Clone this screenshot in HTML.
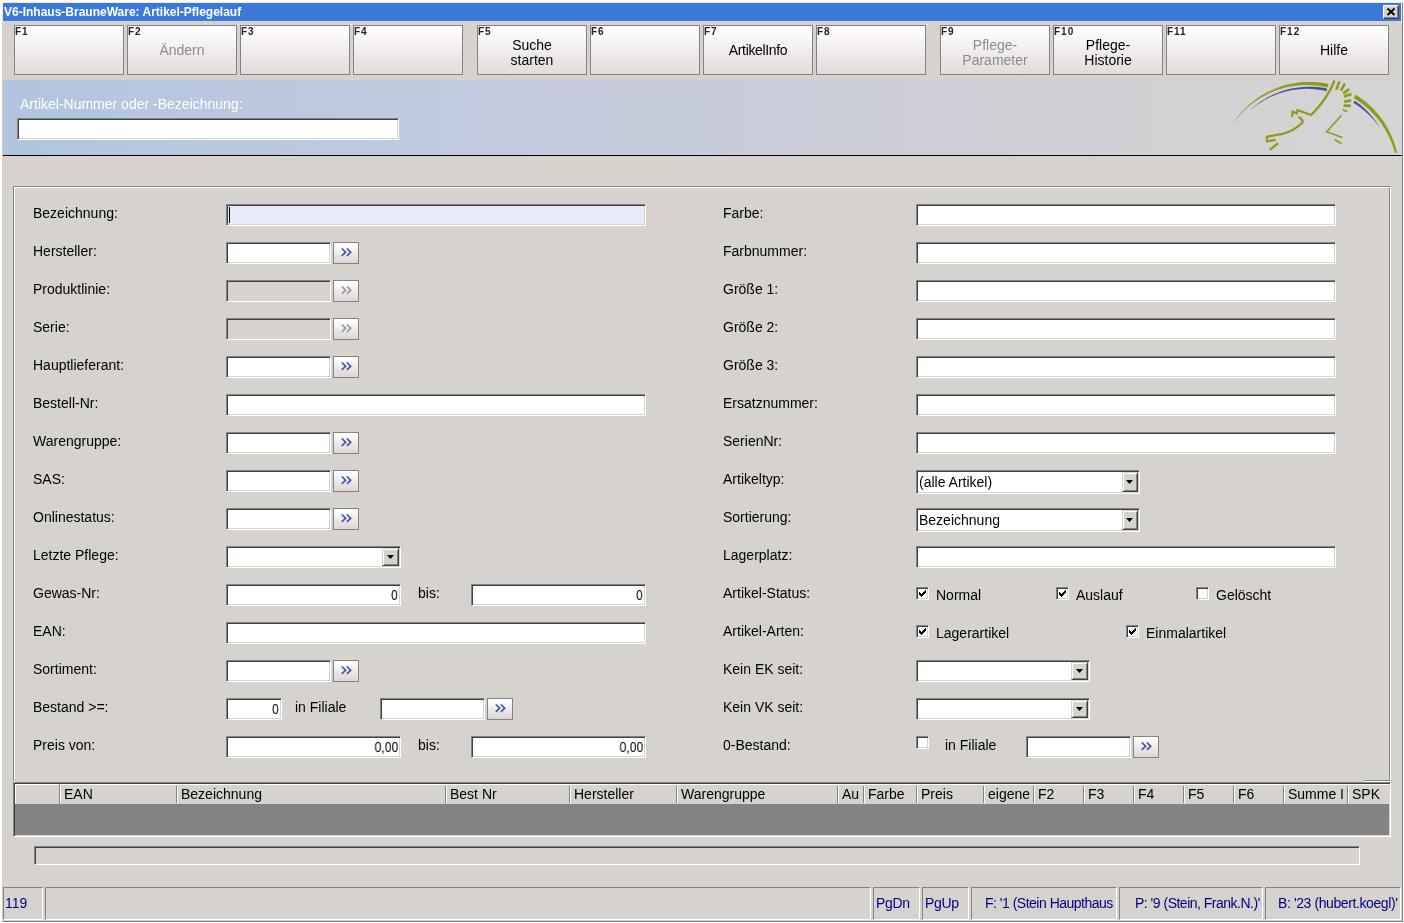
<!DOCTYPE html><html><head><meta charset="utf-8"><style>
*{box-sizing:border-box}
html,body{margin:0;padding:0}
body{width:1404px;height:923px;position:relative;overflow:hidden;background:#fff;font-family:"Liberation Sans",sans-serif;}
div{position:absolute}
.t{white-space:nowrap;will-change:transform}
.sk{border:1px solid;border-color:#848284 #fff #fff #848284;box-shadow:inset 1px 1px 0 #424142, inset -1px -1px 0 #d6d3ce}
.bt{border:1px solid #848284;background:linear-gradient(#fff 0%,#fbf8f9 20%,#ebe6e6 60%,#dcd6d5 100%)}
.fk{border:1px solid #848284;background:linear-gradient(#fff 0%,#fdfafb 15%,#f0ebec 55%,#e2dcdb 100%)}
.dd{right:1px;top:1px;width:17px;height:18px;background:#d6d3ce;border:1px solid;border-color:#d6d3ce #424142 #424142 #d6d3ce;box-shadow:inset 1px 1px 0 #fff, inset -1px -1px 0 #848284}
.cb{width:13px;height:13px;background:#fff;border:1px solid;border-color:#848284 #fff #fff #848284;box-shadow:inset 1px 1px 0 #424142, inset -1px -1px 0 #d6d3ce}
.sp{border:1px solid;border-color:#848284 #fff #fff #848284}
</style></head><body>
<div style="position:absolute;left:2px;top:2px;width:1401px;height:920px;background:#d6d3ce;border-left:1px solid #cfcbc3;border-top:1px solid #f1ebdf;border-right:1px solid #848284;border-bottom:1px solid #848284"></div>
<div style="position:absolute;left:2px;top:2px;width:1px;height:20px;background:#f1ebdf"></div>
<div style="position:absolute;left:1401px;top:2px;width:1px;height:20px;background:#f1ebdf"></div>
<div style="position:absolute;left:3px;top:3px;width:1398px;height:18px;background:#3a79d9"></div>
<div class="t" style="left:4px;top:5px;font-size:12px;line-height:14px;color:#fff;font-weight:bold;">V6-Inhaus-BrauneWare: Artikel-Pflegelauf</div>
<div style="position:absolute;left:1383px;top:5px;width:16px;height:14px;background:#d6d3ce;border:1px solid;border-color:#fff #424142 #424142 #fff;box-shadow:inset -1px -1px 0 #848284"><svg width="14" height="12" style="position:absolute;left:0;top:0"><path d="M3.5 2.5L10.5 9M10.5 2.5L3.5 9" stroke="#000" stroke-width="1.9"/></svg></div>
<div class="fk" style="left:14px;top:25px;width:110px;height:50px"><div class="t" style="left:0px;top:-1px;font-size:10px;line-height:13px;font-weight:bold;color:#222;letter-spacing:1px">F1</div></div>
<div class="fk" style="left:127px;top:25px;width:110px;height:50px"><div class="t" style="left:0px;top:-1px;font-size:10px;line-height:13px;font-weight:bold;color:#222;letter-spacing:1px">F2</div><div class="t" style="left:0;width:108px;top:16px;text-align:center;font-size:14px;line-height:16px;color:#8c8c8c;letter-spacing:0px">Ändern</div></div>
<div class="fk" style="left:240px;top:25px;width:110px;height:50px"><div class="t" style="left:0px;top:-1px;font-size:10px;line-height:13px;font-weight:bold;color:#222;letter-spacing:1px">F3</div></div>
<div class="fk" style="left:353px;top:25px;width:110px;height:50px"><div class="t" style="left:0px;top:-1px;font-size:10px;line-height:13px;font-weight:bold;color:#222;letter-spacing:1px">F4</div></div>
<div class="fk" style="left:477px;top:25px;width:110px;height:50px"><div class="t" style="left:0px;top:-1px;font-size:10px;line-height:13px;font-weight:bold;color:#222;letter-spacing:1px">F5</div><div class="t" style="white-space:normal;left:0;width:108px;top:12px;text-align:center;font-size:14px;line-height:15px;color:#000">Suche<br>starten</div></div>
<div class="fk" style="left:590px;top:25px;width:110px;height:50px"><div class="t" style="left:0px;top:-1px;font-size:10px;line-height:13px;font-weight:bold;color:#222;letter-spacing:1px">F6</div></div>
<div class="fk" style="left:703px;top:25px;width:110px;height:50px"><div class="t" style="left:0px;top:-1px;font-size:10px;line-height:13px;font-weight:bold;color:#222;letter-spacing:1px">F7</div><div class="t" style="left:0;width:108px;top:16px;text-align:center;font-size:14px;line-height:16px;color:#000;letter-spacing:-0.35px">ArtikelInfo</div></div>
<div class="fk" style="left:816px;top:25px;width:110px;height:50px"><div class="t" style="left:0px;top:-1px;font-size:10px;line-height:13px;font-weight:bold;color:#222;letter-spacing:1px">F8</div></div>
<div class="fk" style="left:940px;top:25px;width:110px;height:50px"><div class="t" style="left:0px;top:-1px;font-size:10px;line-height:13px;font-weight:bold;color:#222;letter-spacing:1px">F9</div><div class="t" style="white-space:normal;left:0;width:108px;top:12px;text-align:center;font-size:14px;line-height:15px;color:#8c8c8c">Pflege-<br>Parameter</div></div>
<div class="fk" style="left:1053px;top:25px;width:110px;height:50px"><div class="t" style="left:0px;top:-1px;font-size:10px;line-height:13px;font-weight:bold;color:#222;letter-spacing:1px">F10</div><div class="t" style="white-space:normal;left:0;width:108px;top:12px;text-align:center;font-size:14px;line-height:15px;color:#000">Pflege-<br>Historie</div></div>
<div class="fk" style="left:1166px;top:25px;width:110px;height:50px"><div class="t" style="left:0px;top:-1px;font-size:10px;line-height:13px;font-weight:bold;color:#222;letter-spacing:1px">F11</div></div>
<div class="fk" style="left:1279px;top:25px;width:110px;height:50px"><div class="t" style="left:0px;top:-1px;font-size:10px;line-height:13px;font-weight:bold;color:#222;letter-spacing:1px">F12</div><div class="t" style="left:0;width:108px;top:16px;text-align:center;font-size:14px;line-height:16px;color:#000;letter-spacing:0px">Hilfe</div></div>
<div style="position:absolute;left:3px;top:80px;width:1399px;height:75px;background:linear-gradient(90deg,#b1c5df 0%,#c0cadf 30%,#cbcdd8 60%,#d3d1d3 85%,#d7d4d4 100%)"></div>
<div style="position:absolute;left:3px;top:155px;width:1399px;height:1px;background:#000"></div>
<div class="t" style="left:20px;top:96px;font-size:14px;line-height:16px;color:#ffffff;font-weight:normal;">Artikel-Nummer oder -Bezeichnung:</div>
<div class="sk" style="left:17px;top:118px;width:382px;height:22px;background:#fff"></div>
<svg width="180" height="84" viewBox="0 0 180 84" style="position:absolute;left:1224px;top:76px"><path d="M9.16 47.25 L10.67 45.00 L12.25 42.79 L13.90 40.63 L15.61 38.52 L17.39 36.46 L19.23 34.45 L21.13 32.50 L23.09 30.61 L25.10 28.77 L27.17 27.00 L29.30 25.28 L31.47 23.64 L33.70 22.05 L35.97 20.53 L38.29 19.09 L40.65 17.71 L43.05 16.40 L45.50 15.16 L47.98 14.00 L50.49 12.91 L53.04 11.90 L55.62 10.96 L58.22 10.10 L60.86 9.32 L63.51 8.62 L66.19 8.00 L68.88 7.46 L71.60 7.00 L74.32 6.62 L77.06 6.32 L79.81 6.11 L82.56 5.97 L85.32 5.92 L88.08 5.96 L90.84 6.07 L93.59 6.27 L96.34 6.55 L99.08 6.92 L101.81 7.36 L104.53 7.89 L103.68 11.60 L101.10 11.00 L98.49 10.49 L95.87 10.05 L93.24 9.69 L90.59 9.41 L87.94 9.21 L85.28 9.09 L82.61 9.05 L79.95 9.09 L77.28 9.21 L74.62 9.41 L71.97 9.69 L69.32 10.05 L66.69 10.49 L64.06 11.01 L61.46 11.60 L58.87 12.28 L56.30 13.03 L53.75 13.86 L51.23 14.77 L48.73 15.75 L46.27 16.81 L43.83 17.94 L41.43 19.15 L39.07 20.43 L36.74 21.77 L34.46 23.19 L32.21 24.68 L30.01 26.23 L27.86 27.85 L25.76 29.54 L23.71 31.29 L21.71 33.10 L19.76 34.97 L17.87 36.90 L16.04 38.88 L14.26 40.93 L12.55 43.02 L10.90 45.17 L9.32 47.36Z" fill="#8e9b1c"/><path d="M27.58 32.78 L29.10 31.46 L30.65 30.17 L32.23 28.91 L33.83 27.69 L35.47 26.51 L37.14 25.37 L38.83 24.27 L40.54 23.20 L42.29 22.18 L44.05 21.20 L45.84 20.26 L47.66 19.36 L49.49 18.50 L51.34 17.69 L53.21 16.92 L55.10 16.19 L57.01 15.51 L58.93 14.87 L60.87 14.27 L62.83 13.72 L64.79 13.22 L66.77 12.77 L68.76 12.36 L70.75 11.99 L72.76 11.67 L74.78 11.40 L76.80 11.18 L78.82 11.01 L80.85 10.88 L82.89 10.80 L84.92 10.76 L86.96 10.78 L88.99 10.84 L91.03 10.95 L93.06 11.11 L95.09 11.31 L97.11 11.56 L99.13 11.86 L101.14 12.21 L103.14 12.60 L102.58 15.14 L100.64 14.70 L98.70 14.31 L96.75 13.96 L94.79 13.66 L92.82 13.41 L90.85 13.20 L88.87 13.03 L86.89 12.92 L84.90 12.85 L82.91 12.82 L80.93 12.84 L78.94 12.91 L76.95 13.03 L74.97 13.19 L72.99 13.40 L71.01 13.65 L69.04 13.95 L67.08 14.30 L65.13 14.69 L63.18 15.13 L61.25 15.61 L59.32 16.14 L57.41 16.72 L55.51 17.34 L53.63 18.00 L51.76 18.71 L49.91 19.46 L48.07 20.26 L46.26 21.09 L44.46 21.97 L42.68 22.90 L40.93 23.86 L39.20 24.87 L37.49 25.91 L35.80 27.00 L34.14 28.12 L32.51 29.29 L30.90 30.49 L29.33 31.73 L27.78 33.01Z" fill="#3b5595"/><path d="M131.91 18.85 L133.45 19.83 L134.97 20.84 L136.47 21.88 L137.95 22.95 L139.40 24.04 L140.84 25.17 L142.25 26.32 L143.63 27.50 L145.00 28.71 L146.33 29.94 L147.65 31.20 L148.94 32.49 L150.20 33.80 L151.43 35.13 L152.64 36.49 L153.82 37.87 L154.98 39.27 L156.10 40.70 L157.20 42.15 L158.27 43.62 L159.30 45.11 L160.31 46.62 L161.29 48.14 L162.24 49.69 L163.15 51.26 L164.04 52.84 L164.89 54.44 L165.71 56.05 L166.50 57.69 L167.26 59.33 L167.98 60.99 L168.67 62.67 L169.33 64.35 L169.95 66.05 L170.54 67.76 L171.10 69.48 L171.62 71.21 L172.11 72.96 L172.56 74.71 L172.97 76.46 L170.84 76.98 L170.39 75.27 L169.90 73.58 L169.38 71.89 L168.83 70.22 L168.25 68.56 L167.64 66.91 L166.99 65.27 L166.31 63.65 L165.60 62.04 L164.85 60.44 L164.08 58.87 L163.27 57.30 L162.44 55.76 L161.57 54.23 L160.68 52.72 L159.75 51.22 L158.80 49.75 L157.81 48.29 L156.80 46.86 L155.76 45.45 L154.70 44.05 L153.60 42.68 L152.48 41.33 L151.34 40.01 L150.16 38.71 L148.97 37.43 L147.74 36.17 L146.50 34.94 L145.23 33.74 L143.94 32.56 L142.62 31.41 L141.28 30.28 L139.92 29.18 L138.54 28.11 L137.14 27.06 L135.72 26.05 L134.28 25.06 L132.82 24.10 L131.34 23.17 L129.84 22.27Z" fill="#8e9b1c"/><path d="M130.68 24.68 L131.45 25.21 L132.20 25.74 L132.95 26.28 L133.70 26.83 L134.44 27.39 L135.17 27.96 L135.89 28.53 L136.61 29.11 L137.33 29.70 L138.03 30.30 L138.73 30.90 L139.42 31.51 L140.11 32.13 L140.79 32.76 L141.46 33.39 L142.13 34.03 L142.79 34.67 L143.44 35.33 L144.08 35.99 L144.72 36.65 L145.34 37.33 L145.97 38.00 L146.58 38.69 L147.19 39.38 L147.78 40.08 L148.38 40.78 L148.96 41.49 L149.53 42.21 L150.10 42.93 L150.66 43.66 L151.21 44.39 L151.76 45.13 L152.29 45.88 L152.82 46.63 L153.34 47.38 L153.85 48.14 L154.35 48.91 L154.84 49.68 L155.33 50.45 L155.81 51.23 L155.64 51.34 L155.11 50.60 L154.58 49.86 L154.04 49.12 L153.49 48.40 L152.93 47.67 L152.37 46.96 L151.80 46.25 L151.22 45.55 L150.63 44.85 L150.04 44.16 L149.44 43.48 L148.83 42.81 L148.22 42.14 L147.60 41.47 L146.97 40.82 L146.33 40.17 L145.69 39.53 L145.05 38.89 L144.39 38.27 L143.73 37.65 L143.06 37.03 L142.39 36.43 L141.71 35.83 L141.02 35.24 L140.33 34.66 L139.63 34.08 L138.93 33.52 L138.22 32.96 L137.51 32.41 L136.78 31.86 L136.06 31.33 L135.33 30.80 L134.59 30.28 L133.85 29.77 L133.10 29.26 L132.35 28.77 L131.59 28.28 L130.83 27.80 L130.06 27.33 L129.29 26.87Z" fill="#3b5595"/>
<g fill="none" stroke="#8e9b1c" stroke-linecap="butt" stroke-linejoin="miter">
<path d="M110.5 4.5 Q104 22 87.2 39 L73.6 34.3 L72.8 37.3 L68.6 35.8 L68 41" stroke-width="2.2"/>
<path d="M74.5 40.9 Q79.5 43.5 78.3 46.8 Q70 55 58.4 57.8 L42.3 60.8" stroke-width="2.3"/>
<path d="M42.6 60 L43 66.5" stroke-width="2"/>
<path d="M42.5 65.4 L51.6 63.9 M45.7 73.9 L54.2 67.1" stroke-width="2.2"/>
<path d="M117.5 39.2 L102.7 55.7 L118.3 61.6" stroke-width="1.6"/>
<path d="M110.7 63.7 L117.5 67.5" stroke-width="1.8"/>
<path d="M115.4 5.4 L112.4 13.8 M120.9 7.5 L117 14.7 M125.1 13 L119.2 17.6 M127.6 18 L120 20.6 M127.2 24.4 L120 25.7 M126.8 29.9 L119.6 29.5" stroke-width="2.6"/>
<path d="M123.4 35.8 L118.7 33.7" stroke-width="1.6"/>
</g></svg>
<div style="position:absolute;left:13px;top:186px;width:1378px;height:596px;border:1px solid;border-color:#848284 #fff #fff #848284;box-shadow:inset 1px 1px 0 #fff, inset -1px -1px 0 #848284"></div>
<div style="position:absolute;left:16px;top:780px;width:1348px;height:2px;background:#d6d3ce"></div>
<div class="t" style="left:33px;top:205px;font-size:14px;line-height:16px;color:#000;font-weight:normal;">Bezeichnung:</div>
<div class="t" style="left:33px;top:243px;font-size:14px;line-height:16px;color:#000;font-weight:normal;">Hersteller:</div>
<div class="t" style="left:33px;top:281px;font-size:14px;line-height:16px;color:#000;font-weight:normal;">Produktlinie:</div>
<div class="t" style="left:33px;top:319px;font-size:14px;line-height:16px;color:#000;font-weight:normal;">Serie:</div>
<div class="t" style="left:33px;top:357px;font-size:14px;line-height:16px;color:#000;font-weight:normal;">Hauptlieferant:</div>
<div class="t" style="left:33px;top:395px;font-size:14px;line-height:16px;color:#000;font-weight:normal;">Bestell-Nr:</div>
<div class="t" style="left:33px;top:433px;font-size:14px;line-height:16px;color:#000;font-weight:normal;">Warengruppe:</div>
<div class="t" style="left:33px;top:471px;font-size:14px;line-height:16px;color:#000;font-weight:normal;">SAS:</div>
<div class="t" style="left:33px;top:509px;font-size:14px;line-height:16px;color:#000;font-weight:normal;">Onlinestatus:</div>
<div class="t" style="left:33px;top:547px;font-size:14px;line-height:16px;color:#000;font-weight:normal;">Letzte Pflege:</div>
<div class="t" style="left:33px;top:585px;font-size:14px;line-height:16px;color:#000;font-weight:normal;">Gewas-Nr:</div>
<div class="t" style="left:33px;top:623px;font-size:14px;line-height:16px;color:#000;font-weight:normal;">EAN:</div>
<div class="t" style="left:33px;top:661px;font-size:14px;line-height:16px;color:#000;font-weight:normal;">Sortiment:</div>
<div class="t" style="left:33px;top:699px;font-size:14px;line-height:16px;color:#000;font-weight:normal;">Bestand &gt;=:</div>
<div class="t" style="left:33px;top:737px;font-size:14px;line-height:16px;color:#000;font-weight:normal;">Preis von:</div>
<div class="t" style="left:723px;top:205px;font-size:14px;line-height:16px;color:#000;font-weight:normal;">Farbe:</div>
<div class="t" style="left:723px;top:243px;font-size:14px;line-height:16px;color:#000;font-weight:normal;">Farbnummer:</div>
<div class="t" style="left:723px;top:281px;font-size:14px;line-height:16px;color:#000;font-weight:normal;">Größe 1:</div>
<div class="t" style="left:723px;top:319px;font-size:14px;line-height:16px;color:#000;font-weight:normal;">Größe 2:</div>
<div class="t" style="left:723px;top:357px;font-size:14px;line-height:16px;color:#000;font-weight:normal;">Größe 3:</div>
<div class="t" style="left:723px;top:395px;font-size:14px;line-height:16px;color:#000;font-weight:normal;">Ersatznummer:</div>
<div class="t" style="left:723px;top:433px;font-size:14px;line-height:16px;color:#000;font-weight:normal;">SerienNr:</div>
<div class="t" style="left:723px;top:471px;font-size:14px;line-height:16px;color:#000;font-weight:normal;">Artikeltyp:</div>
<div class="t" style="left:723px;top:509px;font-size:14px;line-height:16px;color:#000;font-weight:normal;">Sortierung:</div>
<div class="t" style="left:723px;top:547px;font-size:14px;line-height:16px;color:#000;font-weight:normal;">Lagerplatz:</div>
<div class="t" style="left:723px;top:585px;font-size:14px;line-height:16px;color:#000;font-weight:normal;">Artikel-Status:</div>
<div class="t" style="left:723px;top:623px;font-size:14px;line-height:16px;color:#000;font-weight:normal;">Artikel-Arten:</div>
<div class="t" style="left:723px;top:661px;font-size:14px;line-height:16px;color:#000;font-weight:normal;">Kein EK seit:</div>
<div class="t" style="left:723px;top:699px;font-size:14px;line-height:16px;color:#000;font-weight:normal;">Kein VK seit:</div>
<div class="t" style="left:723px;top:737px;font-size:14px;line-height:16px;color:#000;font-weight:normal;">0-Bestand:</div>
<div class="sk" style="left:226px;top:204px;width:420px;height:22px;background:#e7ebf7"><div style="left:2px;top:2px;width:1px;height:16px;background:#000"></div></div>
<div class="sk" style="left:226px;top:242px;width:105px;height:22px;background:#fff"></div>
<div class="bt" style="left:333px;top:242px;width:26px;height:22px"><svg width="12" height="10" viewBox="0 0 12 10" style="position:absolute;left:7px;top:5px"><path d="M0.8 0.5 L4.6 4.2 L0.8 7.9 M5.9 0.5 L9.7 4.2 L5.9 7.9" fill="none" stroke="#4259ac" stroke-width="1.7"/></svg></div>
<div class="sk" style="left:226px;top:280px;width:105px;height:22px;background:#d6d3ce"></div>
<div class="bt" style="left:333px;top:280px;width:26px;height:22px"><svg width="12" height="10" viewBox="0 0 12 10" style="position:absolute;left:7px;top:5px"><path d="M0.8 0.5 L4.6 4.2 L0.8 7.9 M5.9 0.5 L9.7 4.2 L5.9 7.9" fill="none" stroke="#9c9c9c" stroke-width="1.7"/></svg></div>
<div class="sk" style="left:226px;top:318px;width:105px;height:22px;background:#d6d3ce"></div>
<div class="bt" style="left:333px;top:318px;width:26px;height:22px"><svg width="12" height="10" viewBox="0 0 12 10" style="position:absolute;left:7px;top:5px"><path d="M0.8 0.5 L4.6 4.2 L0.8 7.9 M5.9 0.5 L9.7 4.2 L5.9 7.9" fill="none" stroke="#9c9c9c" stroke-width="1.7"/></svg></div>
<div class="sk" style="left:226px;top:356px;width:105px;height:22px;background:#fff"></div>
<div class="bt" style="left:333px;top:356px;width:26px;height:22px"><svg width="12" height="10" viewBox="0 0 12 10" style="position:absolute;left:7px;top:5px"><path d="M0.8 0.5 L4.6 4.2 L0.8 7.9 M5.9 0.5 L9.7 4.2 L5.9 7.9" fill="none" stroke="#4259ac" stroke-width="1.7"/></svg></div>
<div class="sk" style="left:226px;top:432px;width:105px;height:22px;background:#fff"></div>
<div class="bt" style="left:333px;top:432px;width:26px;height:22px"><svg width="12" height="10" viewBox="0 0 12 10" style="position:absolute;left:7px;top:5px"><path d="M0.8 0.5 L4.6 4.2 L0.8 7.9 M5.9 0.5 L9.7 4.2 L5.9 7.9" fill="none" stroke="#4259ac" stroke-width="1.7"/></svg></div>
<div class="sk" style="left:226px;top:470px;width:105px;height:22px;background:#fff"></div>
<div class="bt" style="left:333px;top:470px;width:26px;height:22px"><svg width="12" height="10" viewBox="0 0 12 10" style="position:absolute;left:7px;top:5px"><path d="M0.8 0.5 L4.6 4.2 L0.8 7.9 M5.9 0.5 L9.7 4.2 L5.9 7.9" fill="none" stroke="#4259ac" stroke-width="1.7"/></svg></div>
<div class="sk" style="left:226px;top:508px;width:105px;height:22px;background:#fff"></div>
<div class="bt" style="left:333px;top:508px;width:26px;height:22px"><svg width="12" height="10" viewBox="0 0 12 10" style="position:absolute;left:7px;top:5px"><path d="M0.8 0.5 L4.6 4.2 L0.8 7.9 M5.9 0.5 L9.7 4.2 L5.9 7.9" fill="none" stroke="#4259ac" stroke-width="1.7"/></svg></div>
<div class="sk" style="left:226px;top:660px;width:105px;height:22px;background:#fff"></div>
<div class="bt" style="left:333px;top:660px;width:26px;height:22px"><svg width="12" height="10" viewBox="0 0 12 10" style="position:absolute;left:7px;top:5px"><path d="M0.8 0.5 L4.6 4.2 L0.8 7.9 M5.9 0.5 L9.7 4.2 L5.9 7.9" fill="none" stroke="#4259ac" stroke-width="1.7"/></svg></div>
<div class="sk" style="left:226px;top:394px;width:420px;height:22px;background:#fff"></div>
<div class="sk" style="left:226px;top:546px;width:175px;height:22px;background:#fff"><div class="dd" style="height:18px;width:17px"><svg width="7" height="4" style="position:absolute;left:4px;top:6px"><path d="M0 0H7L3.5 4Z" fill="#000"/></svg></div></div>
<div class="sk" style="left:226px;top:584px;width:175px;height:22px;background:#fff"><div class="t" style="right:2px;top:2px;font-size:14px;line-height:16px;transform:scaleX(0.87);transform-origin:100% 50%">0</div></div>
<div class="t" style="left:418px;top:585px;font-size:14px;line-height:16px;color:#000;font-weight:normal;">bis:</div>
<div class="sk" style="left:471px;top:584px;width:175px;height:22px;background:#fff"><div class="t" style="right:2px;top:2px;font-size:14px;line-height:16px;transform:scaleX(0.87);transform-origin:100% 50%">0</div></div>
<div class="sk" style="left:226px;top:622px;width:420px;height:22px;background:#fff"></div>
<div class="sk" style="left:226px;top:698px;width:56px;height:22px;background:#fff"><div class="t" style="right:2px;top:2px;font-size:14px;line-height:16px;transform:scaleX(0.87);transform-origin:100% 50%">0</div></div>
<div class="t" style="left:295px;top:699px;font-size:14px;line-height:16px;color:#000;font-weight:normal;">in Filiale</div>
<div class="sk" style="left:380px;top:698px;width:105px;height:22px;background:#fff"></div>
<div class="bt" style="left:487px;top:698px;width:26px;height:22px"><svg width="12" height="10" viewBox="0 0 12 10" style="position:absolute;left:7px;top:5px"><path d="M0.8 0.5 L4.6 4.2 L0.8 7.9 M5.9 0.5 L9.7 4.2 L5.9 7.9" fill="none" stroke="#4259ac" stroke-width="1.7"/></svg></div>
<div class="sk" style="left:226px;top:736px;width:175px;height:22px;background:#fff"><div class="t" style="right:2px;top:2px;font-size:14px;line-height:16px;transform:scaleX(0.87);transform-origin:100% 50%">0,00</div></div>
<div class="t" style="left:418px;top:737px;font-size:14px;line-height:16px;color:#000;font-weight:normal;">bis:</div>
<div class="sk" style="left:471px;top:736px;width:175px;height:22px;background:#fff"><div class="t" style="right:2px;top:2px;font-size:14px;line-height:16px;transform:scaleX(0.87);transform-origin:100% 50%">0,00</div></div>
<div class="sk" style="left:916px;top:204px;width:420px;height:22px;background:#fff"></div>
<div class="sk" style="left:916px;top:242px;width:420px;height:22px;background:#fff"></div>
<div class="sk" style="left:916px;top:280px;width:420px;height:22px;background:#fff"></div>
<div class="sk" style="left:916px;top:318px;width:420px;height:22px;background:#fff"></div>
<div class="sk" style="left:916px;top:356px;width:420px;height:22px;background:#fff"></div>
<div class="sk" style="left:916px;top:394px;width:420px;height:22px;background:#fff"></div>
<div class="sk" style="left:916px;top:432px;width:420px;height:22px;background:#fff"></div>
<div class="sk" style="left:916px;top:546px;width:420px;height:22px;background:#fff"></div>
<div class="sk" style="left:916px;top:470px;width:224px;height:24px;background:#fff"><div class="t" style="left:2px;top:3px;font-size:14px;line-height:16px">(alle Artikel)</div><div class="dd" style="height:20px;width:16px"><svg width="7" height="4" style="position:absolute;left:3px;top:7px"><path d="M0 0H7L3.5 4Z" fill="#000"/></svg></div></div>
<div class="sk" style="left:916px;top:508px;width:224px;height:24px;background:#fff"><div class="t" style="left:2px;top:3px;font-size:14px;line-height:16px">Bezeichnung</div><div class="dd" style="height:20px;width:16px"><svg width="7" height="4" style="position:absolute;left:3px;top:7px"><path d="M0 0H7L3.5 4Z" fill="#000"/></svg></div></div>
<div class="cb" style="left:916px;top:587px"><svg width="7" height="7" shape-rendering="crispEdges" style="position:absolute;left:2px;top:2px"><path d="M6 0h1v3h-1zM5 1h1v3h-1zM4 2h1v3h-1zM3 3h1v3h-1zM2 4h1v3h-1zM1 3h1v3h-1zM0 2h1v3h-1z" fill="#000"/></svg></div>
<div class="t" style="left:936px;top:587px;font-size:14px;line-height:16px;color:#000;font-weight:normal;">Normal</div>
<div class="cb" style="left:1056px;top:587px"><svg width="7" height="7" shape-rendering="crispEdges" style="position:absolute;left:2px;top:2px"><path d="M6 0h1v3h-1zM5 1h1v3h-1zM4 2h1v3h-1zM3 3h1v3h-1zM2 4h1v3h-1zM1 3h1v3h-1zM0 2h1v3h-1z" fill="#000"/></svg></div>
<div class="t" style="left:1076px;top:587px;font-size:14px;line-height:16px;color:#000;font-weight:normal;">Auslauf</div>
<div class="cb" style="left:1196px;top:587px"></div>
<div class="t" style="left:1216px;top:587px;font-size:14px;line-height:16px;color:#000;font-weight:normal;">Gelöscht</div>
<div class="cb" style="left:916px;top:625px"><svg width="7" height="7" shape-rendering="crispEdges" style="position:absolute;left:2px;top:2px"><path d="M6 0h1v3h-1zM5 1h1v3h-1zM4 2h1v3h-1zM3 3h1v3h-1zM2 4h1v3h-1zM1 3h1v3h-1zM0 2h1v3h-1z" fill="#000"/></svg></div>
<div class="t" style="left:936px;top:625px;font-size:14px;line-height:16px;color:#000;font-weight:normal;">Lagerartikel</div>
<div class="cb" style="left:1126px;top:625px"><svg width="7" height="7" shape-rendering="crispEdges" style="position:absolute;left:2px;top:2px"><path d="M6 0h1v3h-1zM5 1h1v3h-1zM4 2h1v3h-1zM3 3h1v3h-1zM2 4h1v3h-1zM1 3h1v3h-1zM0 2h1v3h-1z" fill="#000"/></svg></div>
<div class="t" style="left:1146px;top:625px;font-size:14px;line-height:16px;color:#000;font-weight:normal;">Einmalartikel</div>
<div class="sk" style="left:916px;top:660px;width:174px;height:22px;background:#fff"><div class="dd" style="height:18px;width:17px"><svg width="7" height="4" style="position:absolute;left:4px;top:6px"><path d="M0 0H7L3.5 4Z" fill="#000"/></svg></div></div>
<div class="sk" style="left:916px;top:698px;width:174px;height:22px;background:#fff"><div class="dd" style="height:18px;width:17px"><svg width="7" height="4" style="position:absolute;left:4px;top:6px"><path d="M0 0H7L3.5 4Z" fill="#000"/></svg></div></div>
<div class="cb" style="left:916px;top:736px"></div>
<div class="t" style="left:945px;top:737px;font-size:14px;line-height:16px;color:#000;font-weight:normal;">in Filiale</div>
<div class="sk" style="left:1026px;top:736px;width:105px;height:22px;background:#fff"></div>
<div class="bt" style="left:1133px;top:736px;width:26px;height:22px"><svg width="12" height="10" viewBox="0 0 12 10" style="position:absolute;left:7px;top:5px"><path d="M0.8 0.5 L4.6 4.2 L0.8 7.9 M5.9 0.5 L9.7 4.2 L5.9 7.9" fill="none" stroke="#4259ac" stroke-width="1.7"/></svg></div>
<div style="position:absolute;left:13px;top:782px;width:1378px;height:55px;border:1px solid;border-color:#848284 #fff #fff #848284;box-shadow:inset 1px 1px 0 #424142, inset -1px -1px 0 #d6d3ce;background:#848284"></div>
<div style="position:absolute;left:15px;top:784px;width:45px;height:20px;background:#d6d3ce;border-top:1px solid #fff;border-left:1px solid #fff;border-right:1px solid #848284"></div>
<div style="position:absolute;left:60px;top:784px;width:1329px;height:20px;background:#d6d3ce;border-top:1px solid #fff;border-left:1px solid #fff"></div>
<div class="t" style="left:64px;top:786px;font-size:14px;line-height:16px;color:#000;font-weight:normal;">EAN</div>
<div style="position:absolute;left:176px;top:786px;width:1px;height:17px;background:#848284"></div>
<div style="position:absolute;left:177px;top:786px;width:1px;height:17px;background:#fff"></div>
<div class="t" style="left:181px;top:786px;font-size:14px;line-height:16px;color:#000;font-weight:normal;">Bezeichnung</div>
<div style="position:absolute;left:445px;top:786px;width:1px;height:17px;background:#848284"></div>
<div style="position:absolute;left:446px;top:786px;width:1px;height:17px;background:#fff"></div>
<div class="t" style="left:450px;top:786px;font-size:14px;line-height:16px;color:#000;font-weight:normal;">Best Nr</div>
<div style="position:absolute;left:569px;top:786px;width:1px;height:17px;background:#848284"></div>
<div style="position:absolute;left:570px;top:786px;width:1px;height:17px;background:#fff"></div>
<div class="t" style="left:574px;top:786px;font-size:14px;line-height:16px;color:#000;font-weight:normal;">Hersteller</div>
<div style="position:absolute;left:676px;top:786px;width:1px;height:17px;background:#848284"></div>
<div style="position:absolute;left:677px;top:786px;width:1px;height:17px;background:#fff"></div>
<div class="t" style="left:681px;top:786px;font-size:14px;line-height:16px;color:#000;font-weight:normal;">Warengruppe</div>
<div style="position:absolute;left:837px;top:786px;width:1px;height:17px;background:#848284"></div>
<div style="position:absolute;left:838px;top:786px;width:1px;height:17px;background:#fff"></div>
<div class="t" style="left:842px;top:786px;font-size:14px;line-height:16px;color:#000;font-weight:normal;">Au</div>
<div style="position:absolute;left:863px;top:786px;width:1px;height:17px;background:#848284"></div>
<div style="position:absolute;left:864px;top:786px;width:1px;height:17px;background:#fff"></div>
<div class="t" style="left:868px;top:786px;font-size:14px;line-height:16px;color:#000;font-weight:normal;">Farbe</div>
<div style="position:absolute;left:916px;top:786px;width:1px;height:17px;background:#848284"></div>
<div style="position:absolute;left:917px;top:786px;width:1px;height:17px;background:#fff"></div>
<div class="t" style="left:921px;top:786px;font-size:14px;line-height:16px;color:#000;font-weight:normal;">Preis</div>
<div style="position:absolute;left:983px;top:786px;width:1px;height:17px;background:#848284"></div>
<div style="position:absolute;left:984px;top:786px;width:1px;height:17px;background:#fff"></div>
<div class="t" style="left:988px;top:786px;font-size:14px;line-height:16px;color:#000;font-weight:normal;">eigene</div>
<div style="position:absolute;left:1033px;top:786px;width:1px;height:17px;background:#848284"></div>
<div style="position:absolute;left:1034px;top:786px;width:1px;height:17px;background:#fff"></div>
<div class="t" style="left:1038px;top:786px;font-size:14px;line-height:16px;color:#000;font-weight:normal;">F2</div>
<div style="position:absolute;left:1083px;top:786px;width:1px;height:17px;background:#848284"></div>
<div style="position:absolute;left:1084px;top:786px;width:1px;height:17px;background:#fff"></div>
<div class="t" style="left:1088px;top:786px;font-size:14px;line-height:16px;color:#000;font-weight:normal;">F3</div>
<div style="position:absolute;left:1133px;top:786px;width:1px;height:17px;background:#848284"></div>
<div style="position:absolute;left:1134px;top:786px;width:1px;height:17px;background:#fff"></div>
<div class="t" style="left:1138px;top:786px;font-size:14px;line-height:16px;color:#000;font-weight:normal;">F4</div>
<div style="position:absolute;left:1183px;top:786px;width:1px;height:17px;background:#848284"></div>
<div style="position:absolute;left:1184px;top:786px;width:1px;height:17px;background:#fff"></div>
<div class="t" style="left:1188px;top:786px;font-size:14px;line-height:16px;color:#000;font-weight:normal;">F5</div>
<div style="position:absolute;left:1233px;top:786px;width:1px;height:17px;background:#848284"></div>
<div style="position:absolute;left:1234px;top:786px;width:1px;height:17px;background:#fff"></div>
<div class="t" style="left:1238px;top:786px;font-size:14px;line-height:16px;color:#000;font-weight:normal;">F6</div>
<div style="position:absolute;left:1283px;top:786px;width:1px;height:17px;background:#848284"></div>
<div style="position:absolute;left:1284px;top:786px;width:1px;height:17px;background:#fff"></div>
<div class="t" style="left:1288px;top:786px;font-size:14px;line-height:16px;color:#000;font-weight:normal;">Summe I</div>
<div style="position:absolute;left:1347px;top:786px;width:1px;height:17px;background:#848284"></div>
<div style="position:absolute;left:1348px;top:786px;width:1px;height:17px;background:#fff"></div>
<div class="t" style="left:1352px;top:786px;font-size:14px;line-height:16px;color:#000;font-weight:normal;">SPK</div>
<div class="sk" style="left:34px;top:846px;width:1326px;height:19px;background:#d6d3ce"></div>
<div class="sp" style="left:3px;top:887px;width:40px;height:33px;overflow:hidden"><div class="t" style="left:1px;top:7px;font-size:14px;line-height:16px;color:#000084;letter-spacing:0px">119</div></div>
<div class="sp" style="left:45px;top:887px;width:826px;height:33px;overflow:hidden"></div>
<div class="sp" style="left:873px;top:887px;width:47px;height:33px;overflow:hidden"><div class="t" style="left:2px;top:7px;font-size:14px;line-height:16px;color:#000084;letter-spacing:-0.3px">PgDn</div></div>
<div class="sp" style="left:922px;top:887px;width:47px;height:33px;overflow:hidden"><div class="t" style="left:2px;top:7px;font-size:14px;line-height:16px;color:#000084;letter-spacing:-0.3px">PgUp</div></div>
<div class="sp" style="left:971px;top:887px;width:146px;height:33px;overflow:hidden"><div class="t" style="left:13px;top:7px;font-size:14px;line-height:16px;color:#000084;letter-spacing:-0.5px">F: '1 (Stein Haupthaus</div></div>
<div class="sp" style="left:1119px;top:887px;width:144px;height:33px;overflow:hidden"><div class="t" style="left:15px;top:7px;font-size:14px;line-height:16px;color:#000084;letter-spacing:-0.5px">P: '9 (Stein, Frank.N.)'</div></div>
<div class="sp" style="left:1265px;top:887px;width:136px;height:33px;overflow:hidden"><div class="t" style="left:12px;top:7px;font-size:14px;line-height:16px;color:#000084;letter-spacing:-0.4px">B: '23 (hubert.koegl)'</div></div>
</body></html>
